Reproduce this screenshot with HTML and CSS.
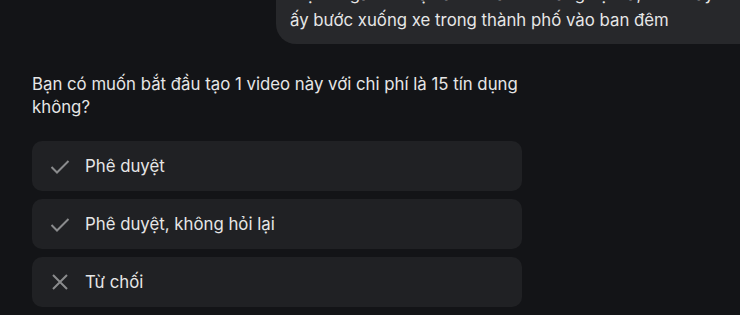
FILE: index.html
```html
<!DOCTYPE html>
<html>

<head>
  <title>Tạo video</title>
  <link rel="stylesheet" href="styles.css">
</head>

<body>
  <div id="chat">
    <div class="user-row">
      <div class="user-bubble">
        Một cô gái trẻ mặc áo khoác đỏ đang vội vã, rồi cô ấy nhìn quanh khi cô<br>
        ấy bước xuống xe trong thành phố vào ban đêm
      </div>
    </div>

    <div id="reply">
      <div id="question">Bạn có muốn bắt đầu tạo 1 video này với chi phí là 15 tín dụng không?</div>
      <div class="choice-list">
        <button class="choice-btn">
          <svg class="choice-icon" viewBox="0 0 24 24"><path d="M3.5 13l5.5 5.5L20.5 7" /></svg>
          <span>Phê duyệt</span>
        </button>
        <button class="choice-btn">
          <svg class="choice-icon" viewBox="0 0 24 24"><path d="M3.5 13l5.5 5.5L20.5 7" /></svg>
          <span>Phê duyệt, không hỏi lại</span>
        </button>
        <button class="choice-btn">
          <svg class="choice-icon" viewBox="0 0 24 24"><path d="M5 5l14 14M19 5L5 19" /></svg>
          <span>Từ chối</span>
        </button>
      </div>
    </div>
  </div>
</body>

</html>
```

FILE: styles.css
```css
body {
  font-family: Inter, Roboto, sans-serif;
  margin: 0;
  padding: 0;
  background-color: #131417;
  color: #e6e6e6;
  overflow: hidden;
}

#chat {
  display: flex;
  flex-direction: column;
}

.user-row {
  display: flex;
  justify-content: flex-end;
  margin-top: -31px;
}

.user-bubble {
  background-color: #27282b;
  border-radius: 20px 0 0 20px;
  padding: 12px 0 11px 14px;
  font-size: 16.8px;
  line-height: 26px;
  white-space: nowrap;
  width: 450px;
  overflow: hidden;
}

#reply {
  width: 490px;
  margin-left: 32px;
  margin-top: 29px;
}

#question {
  font-size: 16.8px;
  line-height: 23px;
  margin-bottom: 22px;
}

.choice-list {
  display: flex;
  flex-direction: column;
  gap: 8px;
}

.choice-btn {
  display: flex;
  align-items: center;
  gap: 13px;
  height: 50px;
  padding: 0 0 0 16px;
  border: none;
  border-radius: 10px;
  background-color: #202124;
  color: #e6e6e6;
  font-family: inherit;
  font-size: 16.8px;
  text-align: left;
  cursor: pointer;
}

.choice-icon {
  width: 24px;
  height: 24px;
  fill: none;
  stroke: #8a8b8d;
  stroke-width: 2;
}
```
